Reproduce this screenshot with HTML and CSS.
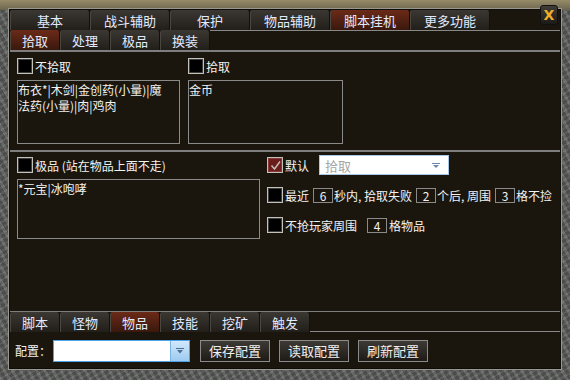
FILE: index.html
```html
<!DOCTYPE html>
<html>
<head>
    <title>脚本挂机 - 物品</title>
    <link rel="stylesheet" href="styles.css">
</head>
<body>
    <div class="window">
        <div class="close">X</div>
        <div class="panel">
            <div class="tabs tabs-main">
                <div class="tab">基本</div>
                <div class="tab">战斗辅助</div>
                <div class="tab">保护</div>
                <div class="tab">物品辅助</div>
                <div class="tab active">脚本挂机</div>
                <div class="tab">更多功能</div>
                <div class="tab-fill"></div>
            </div>
            <div class="tabs tabs-sub">
                <div class="tab active">拾取</div>
                <div class="tab">处理</div>
                <div class="tab">极品</div>
                <div class="tab">换装</div>
                <div class="tab-fill"></div>
            </div>

            <div class="content">
                <div class="pick">
                    <div class="col col-skip">
                        <div class="opt"><span class="check"></span>不拾取</div>
                        <div class="list list-tall">布衣*|木剑|金创药(小量)|魔<br>法药(小量)|肉|鸡肉</div>
                    </div>
                    <div class="col col-take">
                        <div class="opt"><span class="check"></span>拾取</div>
                        <div class="list list-tall">金币</div>
                    </div>
                </div>
                <div class="sep"></div>
                <div class="best">
                    <div class="col col-best">
                        <div class="opt"><span class="check"></span>极品 (站在物品上面不走)</div>
                        <div class="list list-short">*元宝|冰咆哮</div>
                    </div>
                    <div class="col col-rules">
                        <div class="opt">
                            <span class="check on">
                                <svg width="13" height="13" viewBox="0 0 13 13"><path d="M2.5 6.5 L5.5 10 L11 2.5" fill="none" stroke="#c4bcb4" stroke-width="1.5"/></svg>
                            </span>默认
                            <div class="combo">拾取
                                <svg width="8" height="5" viewBox="0 0 8 5"><rect x="0" y="0" width="8" height="1" fill="#6a88a8"/><path d="M1 2 H7 L4 5 Z" fill="#6a88a8"/></svg>
                            </div>
                        </div>
                        <div class="opt opt-tight"><span class="check"></span>最近<span class="num">6</span>秒内, 拾取失败<span class="num">2</span>个后, 周围<span class="num">3</span>格不捡</div>
                        <div class="opt"><span class="check"></span>不抢玩家周围<span class="num num-wide">4</span>格物品</div>
                    </div>
                </div>
            </div>

            <div class="tabs tabs-bottom">
                <div class="tab">脚本</div>
                <div class="tab">怪物</div>
                <div class="tab active">物品</div>
                <div class="tab">技能</div>
                <div class="tab">挖矿</div>
                <div class="tab">触发</div>
                <div class="tab-fill"></div>
            </div>

            <div class="footer">
                <span class="cfg-label">配置：</span>
                <div class="cfg-combo">
                    <div class="drop">
                        <svg width="8" height="6" viewBox="0 0 8 6"><rect x="0" y="0" width="8" height="1" fill="#4f6f90"/><path d="M1 2 H7 L4 5.5 Z" fill="#4f6f90"/></svg>
                    </div>
                </div>
                <div class="btn first">保存配置</div>
                <div class="btn">读取配置</div>
                <div class="btn">刷新配置</div>
            </div>
        </div>
    </div>
</body>
</html>
```

FILE: styles.css
```css
* {
    box-sizing: border-box;
}
body {
    margin: 0;
    font-family: "Noto Sans CJK SC", "Liberation Sans", sans-serif;
    font-size: 12px;
    color: #f2f2f2;
    background: #111;
}
.window {
    position: relative;
    width: 570px;
    height: 380px;
    padding: 10px 10px 12px 10px;
    background:
        linear-gradient(#978c68, #6c6550) top / 100% 10px no-repeat,
        repeating-linear-gradient(60deg, rgba(255,255,255,0.08) 0 3px, rgba(0,0,0,0.12) 3px 7px),
        repeating-linear-gradient(-30deg, rgba(255,255,255,0.05) 0 2px, rgba(0,0,0,0.1) 2px 5px),
        #5f615f;
}
.close {
    position: absolute;
    top: 5px;
    right: 12px;
    width: 18px;
    height: 20px;
    border: 1px solid #111;
    border-radius: 3px;
    background: linear-gradient(#403d38, #1c1a17);
    color: #f0ae2a;
    font-family: "DejaVu Sans", sans-serif;
    font-weight: bold;
    font-size: 14px;
    display: flex;
    align-items: center;
    justify-content: center;
}
.panel {
    height: 100%;
    display: flex;
    flex-direction: column;
    background: #1a160d;
    box-shadow: 0 0 0 1px #0e0c08, 0 0 0 2px #9a988e;
}

/* tab rows */
.tabs {
    display: flex;
    flex: none;
    height: 20px;
}
.tab {
    width: 80px;
    display: flex;
    align-items: center;
    justify-content: center;
    font-size: 13px;
    color: #e2eaff;
    background: linear-gradient(#3b3732, #221f1b);
    border-left: 1px solid #4a4640;
    border-right: 1px solid #12100c;
    border-radius: 3px 3px 0 0;
}
.tab.active {
    background: linear-gradient(#6c2a17, #3a180e);
}
.tab-fill {
    flex: 1;
}
.tabs-sub {
    height: 22px;
    border-bottom: 2px solid #7e7e7e;
}
.tabs-sub .tab,
.tabs-bottom .tab {
    width: 50px;
}
.tabs-sub .tab-fill {
    border-top: 1px solid #888;
}
.tabs-bottom {
    height: 21px;
    border-top: 1px solid #7e7e7e;
}
.tabs-bottom .tab-fill {
    border-bottom: 1px solid #888;
}

/* content */
.content {
    flex: 1;
    padding-left: 7px;
}
.pick {
    display: flex;
    padding-top: 4px;
}
.col {
    display: flex;
    flex-direction: column;
    gap: 4px;
}
.col-skip {
    width: 163px;
}
.col-take {
    width: 155px;
    margin-left: 8px;
}
.sep {
    height: 2px;
    margin: 6px 0 0 -7px;
    background: #7e7e7e;
}
.best {
    display: flex;
    padding-top: 3px;
}
.col-best {
    width: 243px;
}
.col-rules {
    margin-left: 7px;
    gap: 10px;
}
.opt {
    display: flex;
    align-items: center;
    gap: 2px;
    height: 20px;
    white-space: nowrap;
}
.opt-tight {
    gap: 1px;
}
.opt-tight .check {
    margin-right: 1px;
}
.opt-tight .num {
    margin-left: 3px;
}
.check {
    flex: none;
    width: 16px;
    height: 16px;
    border: 1px solid #c2c2ba;
    background: #000;
    box-shadow: inset 0 0 0 1px #3c3c3c;
    display: flex;
    align-items: center;
    justify-content: center;
}
.check.on {
    background: #6a1d1b;
    box-shadow: inset 0 0 0 1px #8a3a36;
}
.list {
    border: 1px solid #8a8a8a;
    line-height: 16px;
    padding-top: 1px;
    white-space: nowrap;
}
.list-tall {
    height: 64px;
}
.list-short {
    height: 60px;
}
.combo {
    width: 130px;
    height: 20px;
    margin-left: 8px;
    padding: 0 8px 0 5px;
    background: #fff;
    border: 1px solid #a8c8e6;
    color: #a4a4a4;
    font-size: 13px;
    display: flex;
    align-items: center;
    justify-content: space-between;
}
.num {
    flex: none;
    width: 20px;
    height: 15px;
    margin-left: 4px;
    border: 1px solid #8a8a8a;
    text-align: center;
    line-height: 13px;
}
.num-wide {
    margin-left: 8px;
}

/* footer */
.footer {
    flex: none;
    height: 36px;
    padding: 1px 0 0 5px;
    display: flex;
    align-items: center;
}
.cfg-label {
    flex: none;
    width: 38px;
    font-size: 12px;
    white-space: nowrap;
}
.cfg-combo {
    width: 137px;
    height: 22px;
    border: 1px solid #4ea2ea;
    background: #fff;
    display: flex;
    justify-content: flex-end;
}
.drop {
    width: 19px;
    background: linear-gradient(#d2e8fa, #9ccaf0);
    border-left: 1px solid #7ab4e4;
    display: flex;
    align-items: center;
    justify-content: center;
}
.btn {
    width: 70px;
    height: 22px;
    margin-left: 9px;
    border: 1px solid #8a8a8a;
    background: linear-gradient(#3d3934, #1e1b17);
    color: #f0f0f0;
    font-size: 13px;
    display: flex;
    align-items: center;
    justify-content: center;
}
.btn.first {
    margin-left: 10px;
}
```
